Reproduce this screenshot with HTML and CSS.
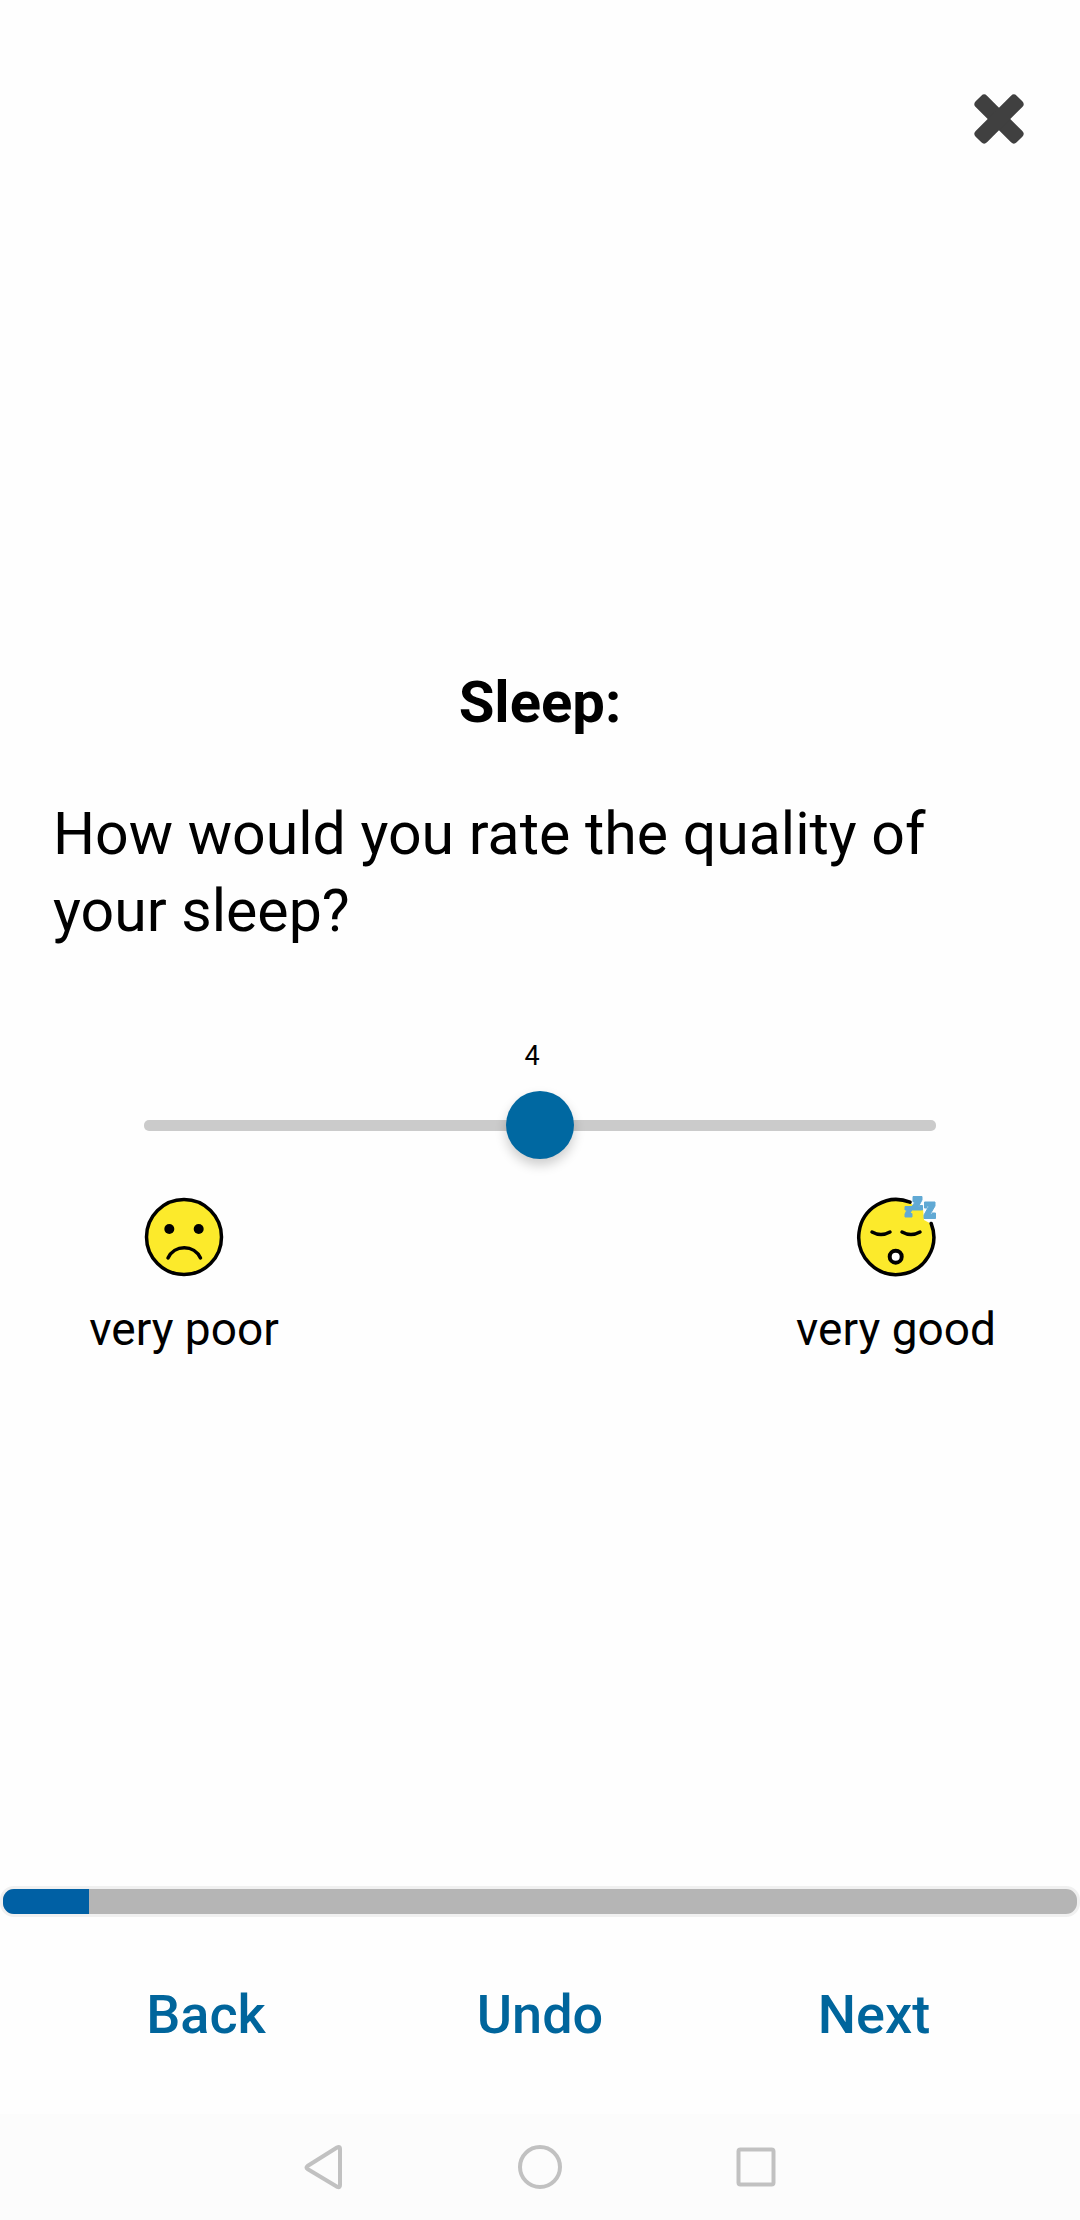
FILE: index.html
```html
<!DOCTYPE html>
<html lang="en">
<head>
<meta charset="utf-8">
<meta name="viewport" content="width=device-width, initial-scale=1">
<title>Sleep</title>
<link rel="stylesheet" href="styles.css">
</head>
<body>
<div class="screen">
  <header class="top">
    <button class="close" type="button" aria-label="Close">
      <svg viewBox="0 0 50 50" width="50" height="50" aria-hidden="true"><g fill="#404040"><rect x="-4" y="17" width="58" height="16" rx="4" transform="rotate(45 25 25)"/><rect x="-4" y="17" width="58" height="16" rx="4" transform="rotate(-45 25 25)"/></g></svg>
    </button>
  </header>
  <main class="survey">
    <h1 class="title">Sleep:</h1>
    <label class="question" for="quality">How would you rate the quality of your sleep?</label>
    <div class="scale">
      <output class="value" for="quality">4</output>
      <input class="slider" id="quality" type="range" min="1" max="7" value="4">
    </div>
    <div class="ends">
      <div class="end">
        <svg class="face" viewBox="0 0 80 80" aria-hidden="true">
          <circle cx="40" cy="40" r="37.5" fill="#fcea2b" stroke="#000" stroke-width="3.5"/>
          <circle cx="25.3" cy="32" r="5"/><circle cx="54.7" cy="32" r="5"/>
          <path d="M24 61A18 18 0 0 1 56.5 61" fill="none" stroke="#000" stroke-width="3.5" stroke-linecap="round"/>
        </svg>
        <span>very poor</span>
      </div>
      <div class="end">
        <svg class="face" viewBox="0 0 80 80" aria-hidden="true">
          <path d="M53 5A37.5 37.5 0 1 0 75.5 27L68 23L67 12L57 8Z" fill="#fcea2b"/>
          <path d="M54 5.2A37.5 37.5 0 1 0 75.2 26.5" fill="none" stroke="#000" stroke-width="3.5" stroke-linecap="round"/>
          <path d="M16 35Q25 40 34 35M46 35Q55 40 64 35" fill="none" stroke="#000" stroke-width="3.5" stroke-linecap="round"/>
          <circle cx="39.7" cy="59.7" r="6" fill="#fff" stroke="#000" stroke-width="4"/>
          <g fill="#61a9d4" stroke="#61a9d4" stroke-linejoin="round">
            <path d="M68.500 5H79V9L74 17.500H76V16H79.500V21.500H68V18L73 9H71V11H68.500Z"/>
            <path d="M57 -.5H66V3L62.500 9.500H63.500V8.500H66.500V13H56V9.500L60 3.500H59V5H57Z"/>
            <path d="M49 9.500H56V12.500L54 16.500H56V20H49V17L51 13H49Z"/>
          </g>
        </svg>
        <span>very good</span>
      </div>
    </div>
  </main>
  <footer class="bottom">
    <div class="progress" role="progressbar" aria-label="Survey progress" aria-valuemin="0" aria-valuemax="100" aria-valuenow="8"><div class="bar" style="width:8%"></div></div>
    <div class="actions">
      <button type="button">Back</button>
      <button type="button">Undo</button>
      <button type="button">Next</button>
    </div>
  </footer>
  <nav class="system" aria-label="System">
    <button type="button" aria-label="Back"><svg viewBox="0 0 48 48"><path d="M38.5 4Q40 4 40 6V42Q40 45 37.5 44L7.5 26Q5.500 24.5 7.500 23L37 4.500Q38 4 38.500 4Z"/></svg></button>
    <button type="button" aria-label="Home"><svg viewBox="0 0 48 48"><circle cx="24" cy="24" r="20"/></svg></button>
    <button type="button" aria-label="Recent apps"><svg viewBox="0 0 48 48"><rect x="6.5" y="6.5" width="35" height="35" rx="2"/></svg></button>
  </nav>
</div>
</body>
</html>
```
FILE: styles.css
```css
* { box-sizing: border-box; }
body { margin: 0; background: #fefefe; color: #000; font-family: Roboto, sans-serif; }
button { padding: 0; border: 0; background: none; font: inherit; color: inherit; }
svg { display: block; }
.screen { display: flex; flex-direction: column; min-height: 100vh; }
.top { display: flex; justify-content: flex-end; padding: 94px 56px 0; }
.survey { flex: 1; display: flex; flex-direction: column; padding-top: 520px; }
.title, .question { margin: 0; padding: 0 53px; line-height: 77px; }
.title { font-size: 58px; font-weight: 700; text-align: center; }
.question { margin-top: 54px; font-size: 59px; }
.scale { display: flex; flex-direction: column; gap: 19px; margin-top: 91px; padding: 0 144px; }
.value { padding-right: 16px; font-size: 27px; line-height: 32px; text-align: center; }
.slider { appearance: none; width: 100%; height: 68px; margin: 0; background: none; }
.slider::-webkit-slider-runnable-track { height: 11px; border-radius: 5px; background: #cbcbcb; }
.slider::-webkit-slider-thumb { appearance: none; width: 68px; height: 68px; margin-top: -29px; border-radius: 50%; background: #0068a1; box-shadow: 0 6px 12px rgba(0, 0, 0, 0.2); }
.ends { display: flex; justify-content: space-between; margin-top: 38px; padding: 0 80px; }
.end { display: flex; flex-direction: column; align-items: center; gap: 24px; width: 208px; font-size: 46px; line-height: 56px; white-space: nowrap; }
.face { width: 80px; height: 80px; overflow: visible; }
.progress { height: 31px; border: 3px solid #f0f0f0; border-radius: 14px; background: #b5b5b5; overflow: hidden; }
.bar { height: 100%; background: #0060a4; }
.actions { display: grid; grid-template-columns: repeat(3, 1fr); padding: 66px 39px 67px; color: #00659c; font-size: 54px; font-weight: 500; line-height: 64px; }
.system { display: flex; justify-content: center; gap: 168px; padding: 29px 0; background: #fcfcfc; }
.system svg { width: 48px; height: 48px; fill: none; stroke: #c1c1c1; stroke-width: 4; stroke-linejoin: round; }
```
